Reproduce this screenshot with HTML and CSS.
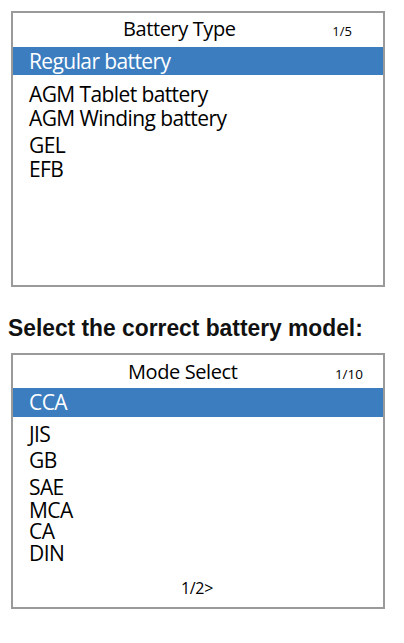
FILE: index.html
```html
<!DOCTYPE html>
<html>
<head>
<meta charset="utf-8">
<link rel="stylesheet" href="styles.css">
</head>
<body>
<div class="panel panel-one">
  <div class="head">
    <span class="title">Battery Type</span>
    <span class="count">1/5</span>
  </div>
  <div class="item selected">Regular battery</div>
  <div class="list">
    <div class="item">AGM Tablet battery</div>
    <div class="item">AGM Winding battery</div>
    <div class="item gap3">GEL</div>
    <div class="item">EFB</div>
  </div>
</div>
<div class="caption"><span class="caption-text">Select the correct battery model:</span></div>
<div class="panel panel-two">
  <div class="head">
    <span class="title">Mode Select</span>
    <span class="count">1/10</span>
  </div>
  <div class="item selected">CCA</div>
  <div class="list">
    <div class="item">JIS</div>
    <div class="item gap5">GB</div>
    <div class="item gap6">SAE</div>
    <div class="item gap2">MCA</div>
    <div class="item">CA</div>
    <div class="item gap1">DIN</div>
  </div>
  <div class="pager">1/2&gt;</div>
</div>
</body>
</html>
```
FILE: styles.css
```css
html, body {
  margin: 0;
  padding: 0;
  background: #ffffff;
}
body {
  width: 404px;
  height: 643px;
  overflow: hidden;
  font-family: "Open Sans", "Noto Sans", sans-serif;
  font-weight: 500;
  color: #000;
}
.panel {
  box-sizing: border-box;
  margin-left: 11px;
  width: 374px;
  border: 2px solid #9a9a9a;
  display: flex;
  flex-direction: column;
}
.panel-one {
  margin-top: 11px;
  height: 276px;
}
.panel-two {
  height: 256px;
}
.head {
  display: flex;
  align-items: baseline;
  box-sizing: border-box;
  line-height: 24px;
}
.panel-one .head { height: 34px; padding-top: 4px; }
.panel-two .head { height: 33px; padding-top: 5px; }
.title {
  font-size: 20px;
  letter-spacing: -0.4px;
}
.count {
  font-size: 13px;
  margin-left: auto;
}
.panel-one .title { padding-left: 110px; }
.panel-one .count { padding-right: 31px; }
.panel-two .title { padding-left: 115px; }
.panel-two .count { padding-right: 20px; font-size: 13.5px; }
.item {
  font-size: 21px;
  letter-spacing: -0.6px;
  padding-left: 16px;
  line-height: 24px;
  height: 24px;
}
.selected {
  background: #3b7dbf;
  color: #ffffff;
  height: 28px;
  line-height: 28px;
}
.panel-one .list { padding-top: 7px; }
.panel-one .gap3 { margin-top: 3px; }
.panel-two .list { padding-top: 7px; }
.panel-two .item {
  line-height: 21px;
  height: 21px;
}
.panel-two .selected {
  height: 29px;
  line-height: 29px;
}
.gap1 { margin-top: 1px; }
.gap2 { margin-top: 2px; }
.gap5 { margin-top: 5px; }
.gap6 { margin-top: 6px; }
.pager {
  text-align: center;
  font-size: 16px;
  line-height: 20px;
  margin-top: 14px;
  padding-right: 2px;
  letter-spacing: -0.3px;
}
.caption {
  margin: 26px 0 0 8px;
  height: 40px;
  font-family: "Liberation Sans", "Arial", sans-serif;
  font-weight: bold;
  font-size: 24px;
  line-height: 30px;
  color: #111;
}
.caption-text {
  display: inline-block;
  transform: scaleX(0.95);
  transform-origin: left center;
  white-space: nowrap;
}
```
